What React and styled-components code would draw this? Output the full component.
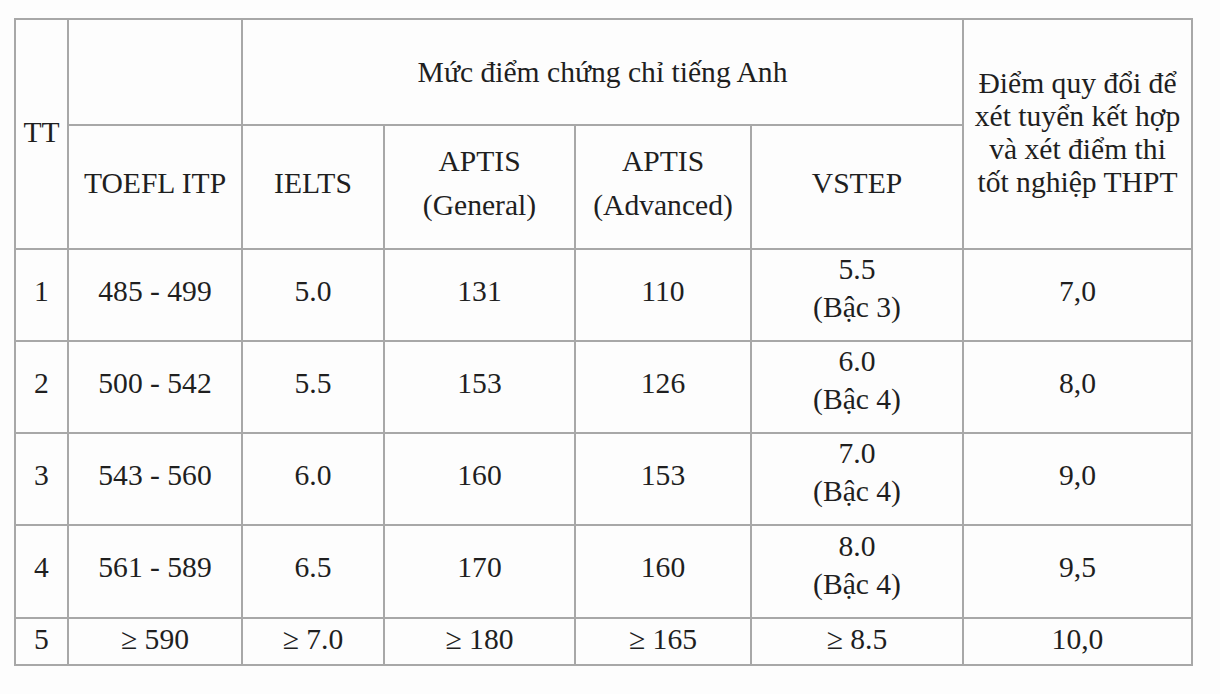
import React from "react";
import styled, { createGlobalStyle } from "styled-components";

const GlobalStyle = createGlobalStyle`
  html, body {
    margin: 0;
    padding: 0;
    background: #ffffff;
  }
`;

const Page = styled.div`
  width: 1220px;
  height: 694px;
  padding: 18px 0 0 14px;
  box-sizing: border-box;
  background: #fdfdfd;
`;

const Table = styled.table`
  width: 1177px;
  table-layout: fixed;
  border-collapse: collapse;
  font-family: "Liberation Serif", "Times New Roman", serif;
  font-size: 30px;
  color: #1f1f1f;
`;

const Row = styled.tr`
  height: ${(p) => p.$h}px;
`;

const Cell = styled.td`
  border: 2px solid #a8a8a8;
  padding: 0 0 ${(p) => (p.$pb === undefined ? 9 : p.$pb)}px;
  text-align: center;
  vertical-align: middle;
  font-family: "Liberation Serif", "Times New Roman", serif;
  font-size: 29.6px;
  line-height: ${(p) => p.$lh || 40}px;
  overflow: hidden;
`;

const widths = [53, 174, 142, 191, 176, 212, 229];

const rows = [
  ["1", "485 - 499", "5.0", "131", "110", ["5.5", "(Bậc 3)"], "7,0"],
  ["2", "500 - 542", "5.5", "153", "126", ["6.0", "(Bậc 4)"], "8,0"],
  ["3", "543 - 560", "6.0", "160", "153", ["7.0", "(Bậc 4)"], "9,0"],
  ["4", "561 - 589", "6.5", "170", "160", ["8.0", "(Bậc 4)"], "9,5"],
];

const lastRow = ["5", "≥ 590", "≥ 7.0", "≥ 180", "≥ 165", "≥ 8.5", "10,0"];

function Lines({ value }) {
  if (Array.isArray(value)) {
    return value.map((line, i) => (
      <React.Fragment key={i}>
        {i > 0 && <br />}
        {line}
      </React.Fragment>
    ));
  }
  return value;
}

export default function App() {
  return (
    <>
      <GlobalStyle />
      <Page>
        <Table>
          <colgroup>
            {widths.map((w, i) => (
              <col key={i} style={{ width: w }} />
            ))}
          </colgroup>
          <tbody>
            <Row $h={106}>
              <Cell rowSpan={2} $pb={4}>TT</Cell>
              <Cell />
              <Cell colSpan={4} $pb={0}>Mức điểm chứng chỉ tiếng Anh</Cell>
              <Cell rowSpan={2} $lh={33} $pb={2}>
                Điểm quy đổi để
                <br />
                xét tuyển kết hợp
                <br />
                và xét điểm thi
                <br />
                tốt nghiệp THPT
              </Cell>
            </Row>
            <Row $h={124}>
              <Cell>TOEFL ITP</Cell>
              <Cell>IELTS</Cell>
              <Cell $lh={44}>
                APTIS
                <br />
                (General)
              </Cell>
              <Cell $lh={44}>
                APTIS
                <br />
                (Advanced)
              </Cell>
              <Cell>VSTEP</Cell>
            </Row>
            {rows.map((r, i) => (
              <Row key={i} $h={i === 3 ? 93 : 92}>
                {r.map((v, j) =>
                  j === 5 ? (
                    <Cell key={j} $lh={38} $pb={14}>
                      <Lines value={v} />
                    </Cell>
                  ) : (
                    <Cell key={j}>{v}</Cell>
                  )
                )}
              </Row>
            ))}
            <Row $h={47}>
              {lastRow.map((v, j) => (
                <Cell key={j} $lh={34} $pb={6}>
                  {v}
                </Cell>
              ))}
            </Row>
          </tbody>
        </Table>
      </Page>
    </>
  );
}
